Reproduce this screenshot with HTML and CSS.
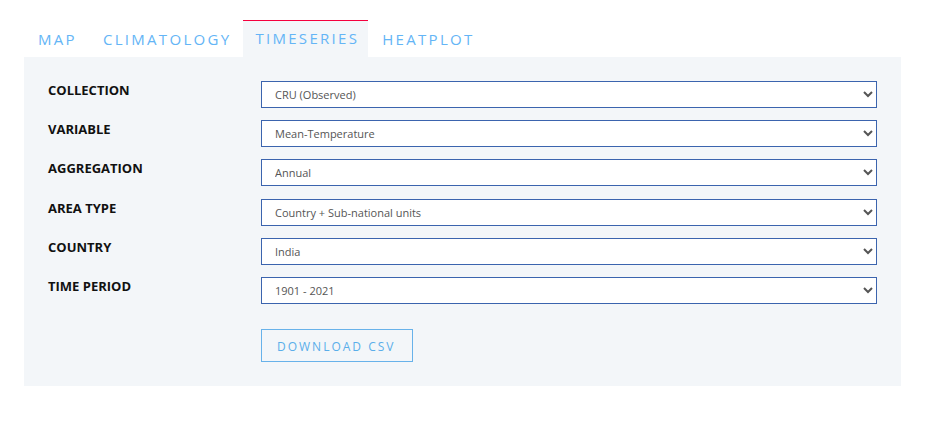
FILE: index.html
```html
<!DOCTYPE html>
<html lang="en">
<head>
    <meta charset="UTF-8">
    <meta name="viewport" content="width=device-width, initial-scale=1.0">
    <title>Timeseries</title>
    <link rel="stylesheet" href="styles.css">
</head>
<body>
    <div class="container">
        <ul class="tabs">
            <li class="tab">Map</li>
            <li class="tab">Climatology</li>
            <li class="tab active">Timeseries</li>
            <li class="tab">Heatplot</li>
        </ul>

        <div class="panel">
            <div class="form">
                <label class="field-label" for="collection">Collection</label>
                <select id="collection" class="field-select">
                    <option>CRU (Observed)</option>
                </select>

                <label class="field-label" for="variable">Variable</label>
                <select id="variable" class="field-select">
                    <option>Mean-Temperature</option>
                </select>

                <label class="field-label" for="aggregation">Aggregation</label>
                <select id="aggregation" class="field-select">
                    <option>Annual</option>
                </select>

                <label class="field-label" for="area-type">Area Type</label>
                <select id="area-type" class="field-select">
                    <option>Country + Sub-national units</option>
                </select>

                <label class="field-label" for="country">Country</label>
                <select id="country" class="field-select">
                    <option>India</option>
                </select>

                <label class="field-label" for="period">Time Period</label>
                <select id="period" class="field-select">
                    <option>1901 - 2021</option>
                </select>

                <div></div>
                <div class="actions">
                    <button class="btn">Download CSV</button>
                </div>
            </div>
        </div>
    </div>
</body>
</html>
```

FILE: styles.css
```css
body {
    font-family: "Open Sans", Arial, sans-serif;
    background: #ffffff;
    color: #222;
    margin: 0;
    padding: 20px 50px 0 24px;
}
.container {
    width: 877px;
}
.tabs {
    list-style: none;
    margin: 0;
    padding: 0;
    display: flex;
}
.tab {
    font-size: 15px;
    letter-spacing: 2.3px;
    text-transform: uppercase;
    color: #64b5f6;
    padding: 0 12px 0 14px;
    height: 35px;
    line-height: 35px;
    border-top: 2px solid transparent;
}
.tab.active {
    background: #f3f6f9;
    border-top: 1px solid #f5003d;
    height: 36px;
    line-height: 34px;
    padding: 0 9px 0 12px;
}
.panel {
    background: #f3f6f9;
    padding: 24px;
}
.form {
    display: grid;
    grid-template-columns: 213px 1fr;
    row-gap: 12.2px;
    align-items: start;
}
.field-label {
    font-size: 13px;
    font-weight: 700;
    text-transform: uppercase;
    color: #111;
    line-height: 18px;
}
.field-select {
    font-family: "Open Sans", Arial, sans-serif;
    font-size: 11px;
    color: #555;
    height: 27px;
    padding: 0 8px 0 9px;
    border: 1px solid #3b64ae;
    border-radius: 0;
    background: #ffffff;
}
.actions {
    padding-top: 13px;
}
.btn {
    font-family: "Open Sans", Arial, sans-serif;
    font-size: 12px;
    letter-spacing: 2px;
    text-transform: uppercase;
    color: #5aaeea;
    background: transparent;
    border: 1px solid #68b2ea;
    padding: 1px 17px 0 15px;
    height: 33px;
    cursor: pointer;
}
```
